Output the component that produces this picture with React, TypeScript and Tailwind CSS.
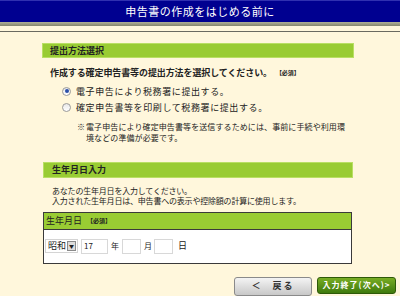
import React from "react";

const jp = { fontFamily: '"Noto Sans CJK JP", "Noto Sans", sans-serif' };

function Radio({ checked }: { checked?: boolean }) {
  return (
    <span className="flex h-[9px] w-[9px] items-center justify-center rounded-full border border-[#9a9a9a] bg-gradient-to-b from-[#e8e8e8] to-white">
      {checked && <span className="h-[4px] w-[4px] rounded-full bg-[#2a4fa8]" />}
    </span>
  );
}

function Box({ w, children }: { w: string; children?: React.ReactNode }) {
  return (
    <span className={`flex h-[15px] ${w} items-center border border-[#d8d8d8] bg-white pl-[2px] text-[8px]`}>
      {children}
    </span>
  );
}

export default function App() {
  return (
    <div className="h-[296px] w-[400px] overflow-hidden bg-[#fff7dc] text-[#222]" style={jp}>
      {/* title bar */}
      <div className="flex h-[22px] items-center justify-center border-t border-[#3030b0] bg-[#000090] text-[11px] tracking-[0.5px] text-white">
        申告書の作成をはじめる前に
      </div>
      <div className="h-[4px] bg-gradient-to-b from-[#b0b098] to-[#86866e]" />
      <div className="h-[5px]" />
      <div className="h-[1px] bg-[#6a6a60]" />

      {/* 提出方法選択 */}
      <div className="ml-[42px] mt-[11px] w-[312px]">
        <div className="flex h-[15px] items-center border border-[#b9df64] bg-[#99cc33] pl-[7px] text-[9px] font-bold">
          提出方法選択
        </div>
        <div className="mt-[8px] flex items-center pl-[8px] text-[9px] font-bold tracking-[-0.1px]">
          作成する確定申告書等の提出方法を選択してください。
          <span className="ml-[4px] text-[6px]">【必須】</span>
        </div>
        <div className="mt-[5px] flex items-center gap-[5px] pl-[20px] text-[9px] tracking-[0.6px]">
          <Radio checked />
          電子申告により税務署に提出する。
        </div>
        <div className="mt-[3px] flex items-center gap-[5px] pl-[20px] text-[9px] tracking-[0.6px]">
          <Radio />
          確定申告書等を印刷して税務署に提出する。
        </div>
        <div className="mt-[6px] flex pl-[35px] text-[8px] leading-[11px]">
          <span className="w-[9px] shrink-0">※</span>
          <span className="w-[262px] tracking-[0.1px]">
            電子申告により確定申告書等を送信するためには、事前に手続や利用環境などの準備が必要です。
          </span>
        </div>
      </div>

      {/* 生年月日入力 */}
      <div className="ml-[43px] mt-[19px] w-[310px]">
        <div className="flex h-[16px] items-center border border-[#b9df64] bg-[#99cc33] pl-[8px] text-[9px] font-bold">
          生年月日入力
        </div>
        <div className="mt-[8px] pl-[9px] text-[8px] leading-[10px] tracking-[-0.2px]">
          <div>あなたの生年月日を入力してください。</div>
          <div>入力された生年月日は、申告書への表示や控除額の計算に使用します。</div>
        </div>
        <div className="mt-[6px] w-[309px] border border-[#3a3a3a]">
          <div className="flex h-[17px] items-center border-b border-[#3a3a3a] bg-[#99cc33] pl-[2px] text-[9px]">
            生年月日
            <span className="ml-[5px] text-[6px] font-bold">【必須】</span>
          </div>
          <div className="flex h-[33px] items-center bg-white text-[9px]">
            <span className="ml-[1px] flex h-[14px] items-center border border-[#d4d4d4] pl-[2px]">
              昭和
              <span className="ml-[1px] mr-[1px] flex h-[10px] w-[9px] items-center justify-center border border-[#8a8a8a] bg-[#dcdcdc] text-[5px]">
                ▼
              </span>
            </span>
            <span className="ml-[3px]">
              <Box w="w-[27px]">17</Box>
            </span>
            <span className="ml-[3px] text-[8px]">年</span>
            <span className="ml-[3px]">
              <Box w="w-[19px]" />
            </span>
            <span className="ml-[3px] text-[8px]">月</span>
            <span className="ml-[2px]">
              <Box w="w-[19px]" />
            </span>
            <span className="ml-[5px] text-[9px]">日</span>
          </div>
        </div>
      </div>

      {/* buttons */}
      <div className="mt-[13px] flex justify-end gap-[5px] pr-[4px]">
        <div className="flex h-[19px] w-[78px] items-center justify-center gap-[12px] rounded-[3px] border border-[#8a8a8a] bg-gradient-to-b from-[#f4f4f4] to-[#c8c8c8] text-[9px] font-bold text-[#333]">
          <span>＜</span>
          <span className="tracking-[2px]">戻る</span>
        </div>
        <div className="flex h-[17px] w-[79px] items-center justify-center rounded-[3px] border border-[#2e5a08] bg-gradient-to-b from-[#78ad24] to-[#3e7a0c] text-[8px] font-bold tracking-[1px] text-white">
          入力終了(次へ)&gt;
        </div>
      </div>
    </div>
  );
}
